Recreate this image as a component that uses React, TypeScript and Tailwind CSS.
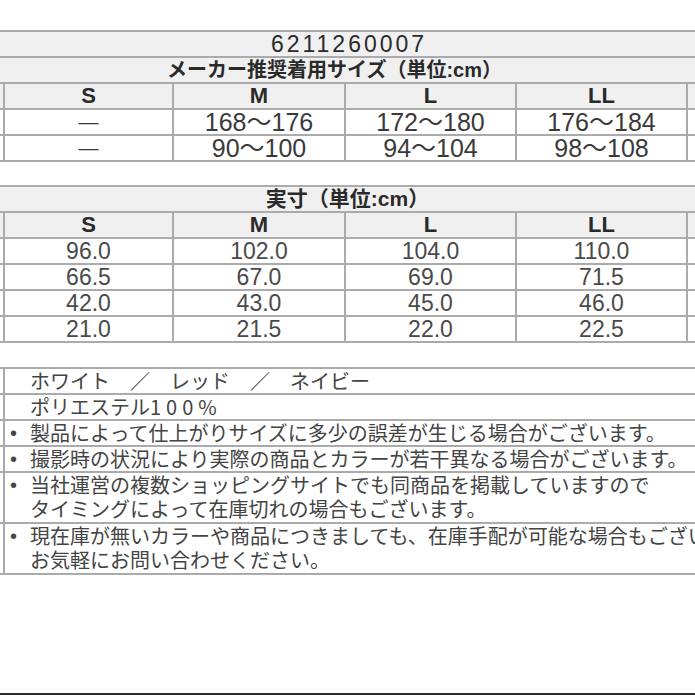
const SIZES = ["S", "M", "L", "LL"];

const RECOMMENDED: string[][] = [
  ["—", "168〜176", "172〜180", "176〜184"],
  ["—", "90〜100", "94〜104", "98〜108"],
];

const ACTUAL: string[][] = [
  ["96.0", "102.0", "104.0", "110.0"],
  ["66.5", "67.0", "69.0", "71.5"],
  ["42.0", "43.0", "45.0", "46.0"],
  ["21.0", "21.5", "22.0", "22.5"],
];

const GRID = "grid h-[26px] grid-cols-[3px_169px_172px_171px_171px_1fr] border-t-2 border-[#ababab]";

function SizeHeader() {
  return (
    <div className={`${GRID} bg-[#f0f0f0]`}>
      <div />
      {SIZES.map((s) => (
        <div
          key={s}
          className="flex items-center justify-center border-l-2 border-[#ababab] text-[22px] leading-[24px] font-bold text-[#2a2a2a]"
        >
          {s}
        </div>
      ))}
      <div className="border-l-2 border-[#ababab]" />
    </div>
  );
}

function DataRow({ cells, size }: { cells: string[]; size: string }) {
  return (
    <div className={`${GRID} bg-white`}>
      <div />
      {cells.map((c, i) => (
        <div
          key={i}
          className={`flex items-center justify-center border-l-2 border-[#ababab] leading-[24px] ${size}`}
        >
          {c === "—" ? <span className="text-[20px]">{c}</span> : c}
        </div>
      ))}
      <div className="border-l-2 border-[#ababab]" />
    </div>
  );
}

const NOTES: { bullet: boolean; lines: string[] }[] = [
  { bullet: false, lines: ["ホワイト　／　レッド　／　ネイビー"] },
  { bullet: false, lines: ["ポリエステル100%"] },
  { bullet: true, lines: ["製品によって仕上がりサイズに多少の誤差が生じる場合がございます。"] },
  { bullet: true, lines: ["撮影時の状況により実際の商品とカラーが若干異なる場合がございます。"] },
  {
    bullet: true,
    lines: ["当社運営の複数ショッピングサイトでも同商品を掲載していますので", "タイミングによって在庫切れの場合もございます。"],
  },
  {
    bullet: true,
    lines: ["現在庫が無いカラーや商品につきましても、在庫手配が可能な場合もございます。", "お気軽にお問い合わせください。"],
  },
];

export default function App() {
  return (
    <div className="flex h-[695px] w-[695px] flex-col overflow-hidden bg-white font-['Liberation_Sans','Noto_Sans_CJK_JP',sans-serif] text-[#333]">
      {/* maker recommended size */}
      <div className="mt-[30px] border-b-2 border-[#ababab]">
        <div className="flex h-[26px] items-center justify-center border-t-2 border-[#ababab] bg-[#f0f0f0] pl-[3px] text-[23px] leading-[24px] tracking-[3px] text-[#2a2a2a]">
          6211260007
        </div>
        <div className="flex h-[26px] items-center justify-center border-t-2 border-[#ababab] bg-[#f0f0f0] pr-[26px] text-[20px] leading-[24px] font-bold text-[#2a2a2a]">
          メーカー推奨着用サイズ（単位:cm）
        </div>
        <SizeHeader />
        {RECOMMENDED.map((r, i) => (
          <DataRow key={i} cells={r} size="text-[25px] text-[#3a3a3a]" />
        ))}
      </div>

      {/* actual measurements */}
      <div className="mt-[23px] border-b-2 border-[#ababab]">
        <div className="flex h-[26px] items-center justify-center border-t-2 border-[#ababab] bg-[#f0f0f0] text-[21px] leading-[24px] font-bold text-[#2a2a2a]">
          実寸（単位:cm）
        </div>
        <SizeHeader />
        {ACTUAL.map((r, i) => (
          <DataRow key={i} cells={r} size="text-[23px] text-[#4a4a4a]" />
        ))}
      </div>

      {/* colour / material / notes */}
      <div className="mt-[24px] border-b-2 border-[#ababab] font-['Noto_Sans_CJK_JP',sans-serif] text-[20px] text-[#444]">
        {NOTES.map((n, i) => (
          <div
            key={i}
            className={`grid grid-cols-[3px_1fr] border-t-2 border-[#ababab] ${n.lines.length > 1 ? "h-[51px]" : "h-[26px]"}`}
          >
            <div />
            <div className="flex border-l-2 border-[#ababab] leading-[24px] whitespace-nowrap">
              {n.bullet ? (
                <span className="w-[25px] shrink-0 pl-[5px] font-['Liberation_Sans',sans-serif]">•</span>
              ) : (
                <span className="w-[25px] shrink-0" />
              )}
              <div className="flex flex-col">
                {n.lines.map((l, j) => (
                  <span key={j}>
                    {l.includes("100%") ? (
                      <>
                        ポリエステル<span className="tracking-[5px]">100%</span>
                      </>
                    ) : (
                      l
                    )}
                  </span>
                ))}
              </div>
            </div>
          </div>
        ))}
      </div>

      <div className="mt-auto h-[2px] bg-[#2b2b2b]" />
    </div>
  );
}
